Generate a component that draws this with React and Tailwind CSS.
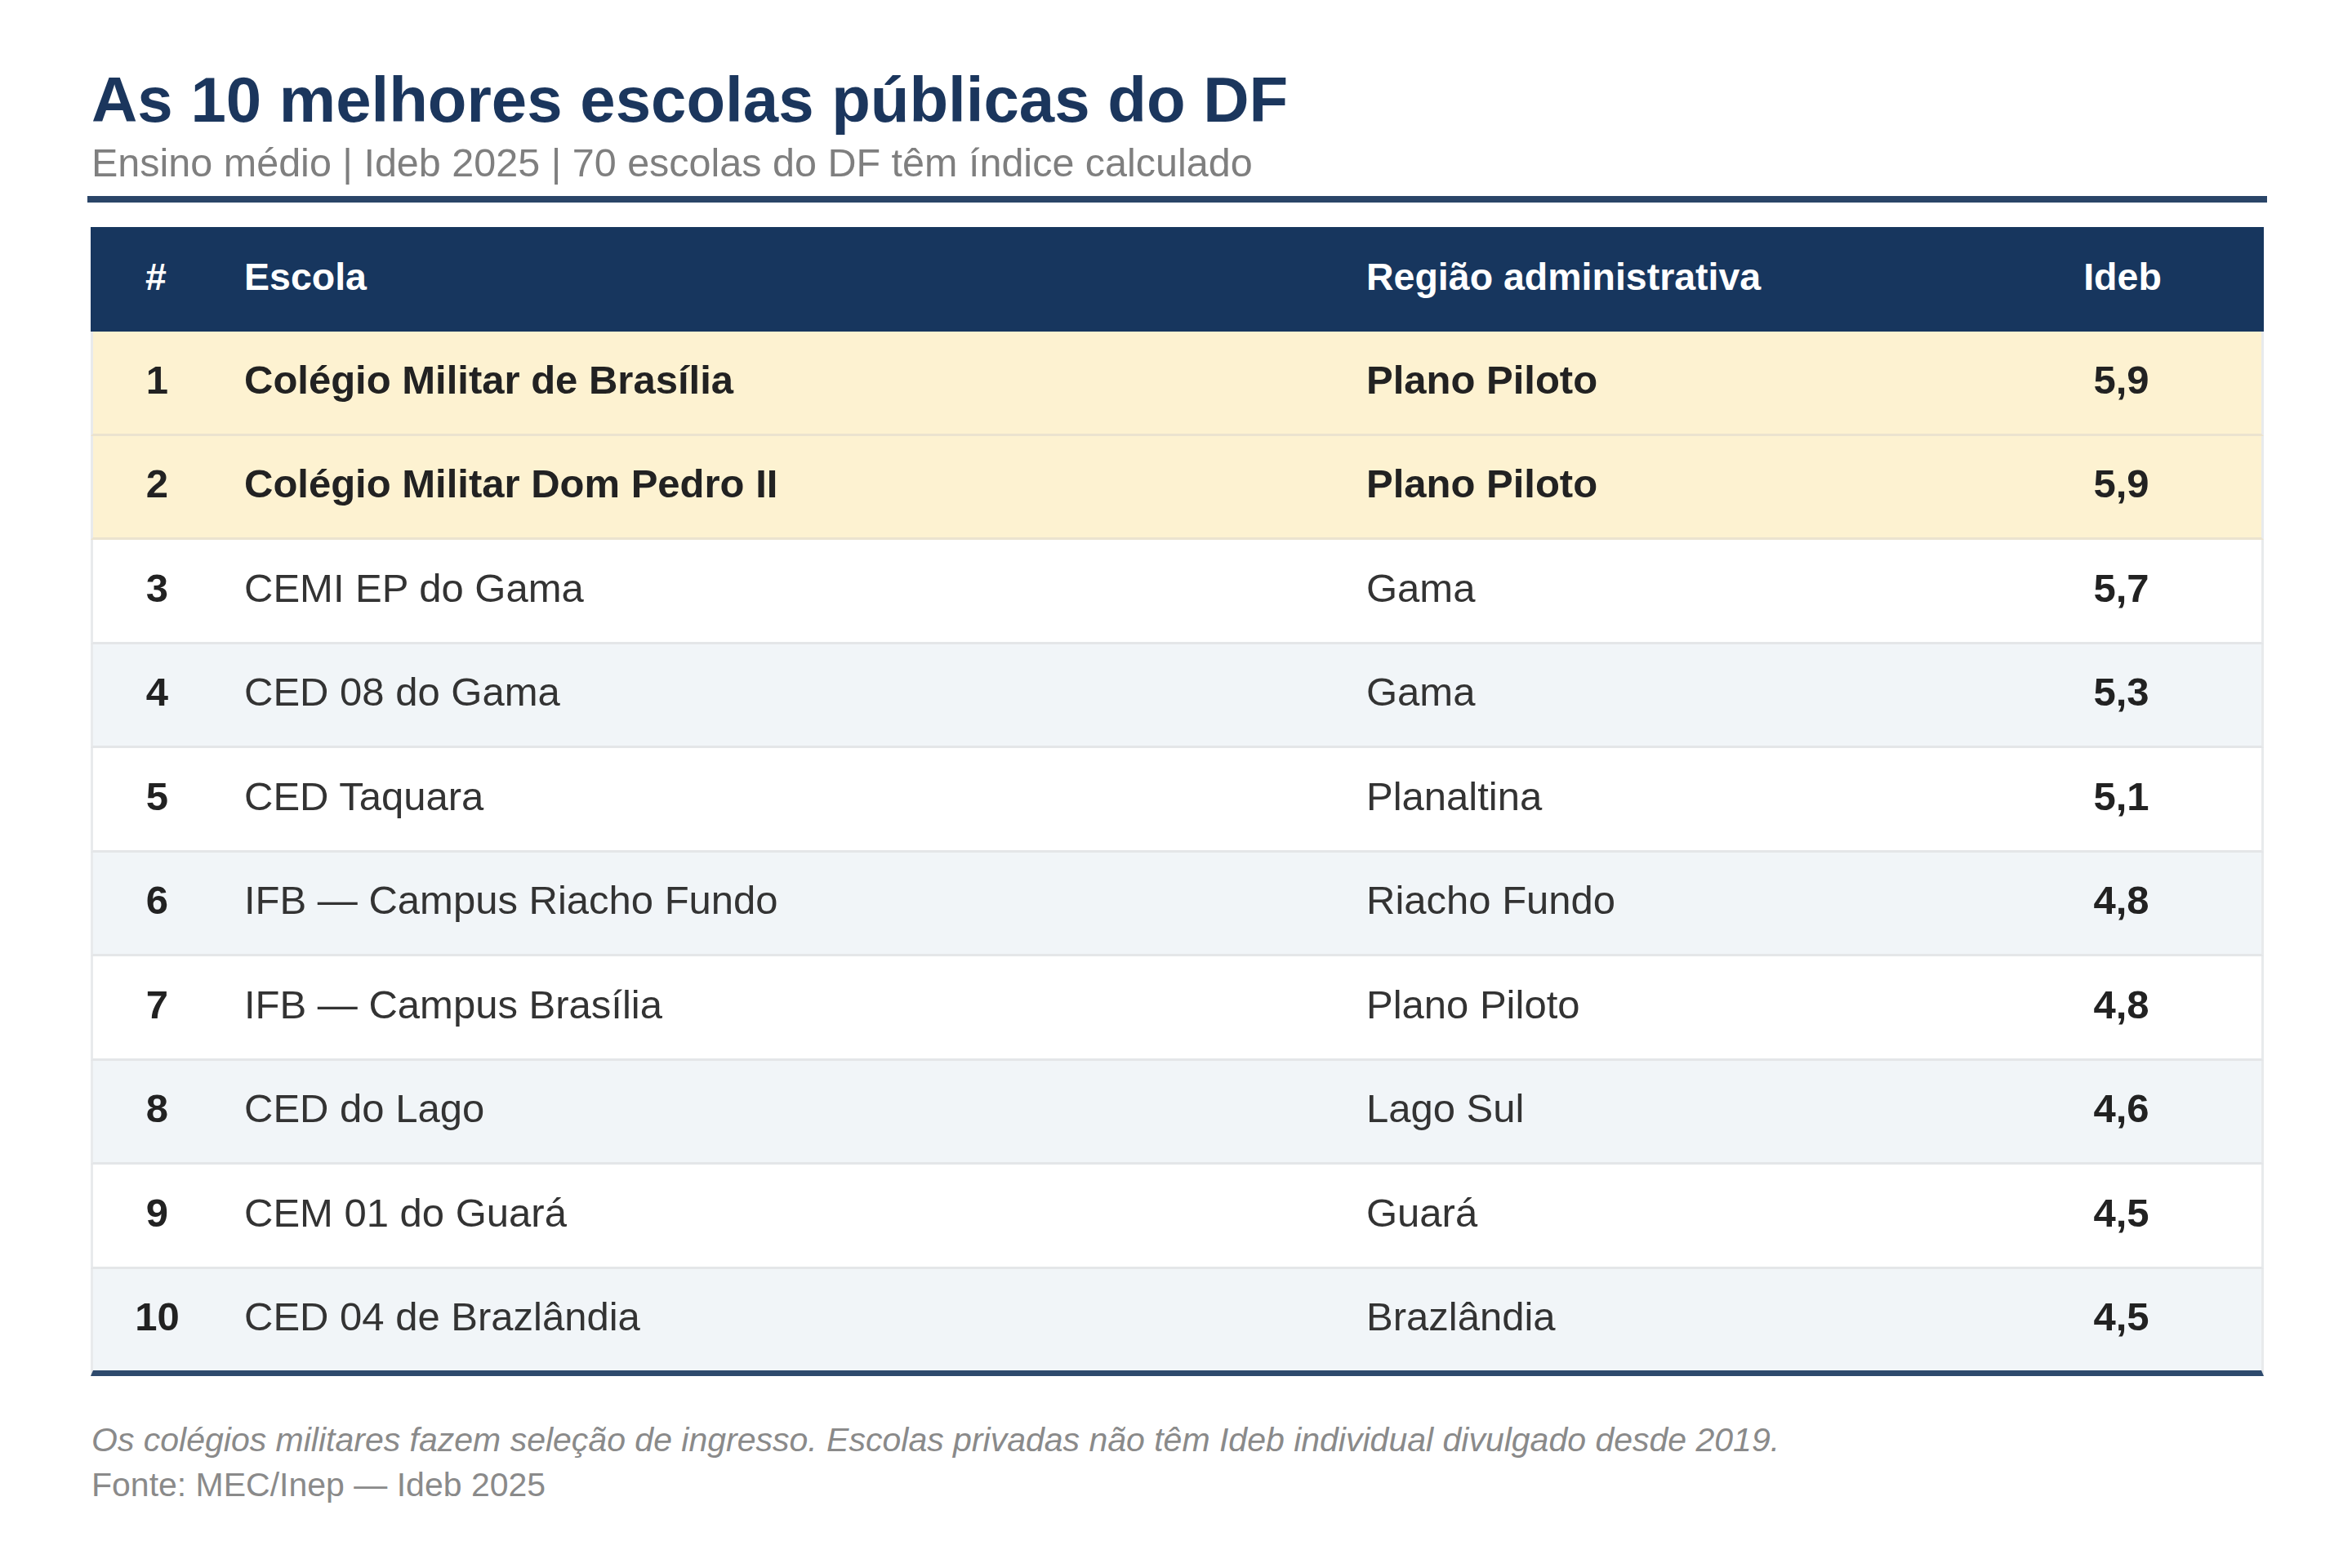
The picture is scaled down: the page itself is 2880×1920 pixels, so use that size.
import React from "react";

const rows = [
  { n: "1", escola: "Colégio Militar de Brasília", regiao: "Plano Piloto", ideb: "5,9", hl: true },
  { n: "2", escola: "Colégio Militar Dom Pedro II", regiao: "Plano Piloto", ideb: "5,9", hl: true },
  { n: "3", escola: "CEMI EP do Gama", regiao: "Gama", ideb: "5,7" },
  { n: "4", escola: "CED 08 do Gama", regiao: "Gama", ideb: "5,3" },
  { n: "5", escola: "CED Taquara", regiao: "Planaltina", ideb: "5,1" },
  { n: "6", escola: "IFB — Campus Riacho Fundo", regiao: "Riacho Fundo", ideb: "4,8" },
  { n: "7", escola: "IFB — Campus Brasília", regiao: "Plano Piloto", ideb: "4,8" },
  { n: "8", escola: "CED do Lago", regiao: "Lago Sul", ideb: "4,6" },
  { n: "9", escola: "CEM 01 do Guará", regiao: "Guará", ideb: "4,5" },
  { n: "10", escola: "CED 04 de Brazlândia", regiao: "Brazlândia", ideb: "4,5" },
];

export default function App() {
  return (
    <div className="min-h-[1920px] w-[2880px] bg-white font-['Liberation_Sans',Arial,sans-serif]">
      <div className="pl-[107px] pt-[77px] w-[2776px]">
        <h1 className="pl-[5px] text-[78px] leading-[90px] font-bold text-[#1b365d]">
          As 10 melhores escolas públicas do DF
        </h1>
        <p className="pl-[5px] pt-[4px] text-[48.5px] leading-[56px] text-[#7f7f7f]">
          Ensino médio | Ideb 2025 | 70 escolas do DF têm índice calculado
        </p>
        <div className="mt-[13px] h-[8px] bg-[#2a4568]" />
        <div className="mt-[30px] mx-[4px]">
          <div className="grid grid-cols-[160px_1374px_781px_1fr] h-[128px] pb-[5px] items-center bg-[#17365e] text-white text-[46.5px] font-bold">
            <div className="text-center">#</div>
            <div className="pl-[28px]">Escola</div>
            <div className="pl-[28px]">Região administrativa</div>
            <div className="text-center">Ideb</div>
          </div>
          {rows.map((r, i) => {
            const last = i === rows.length - 1;
            const bg = r.hl ? "bg-[#fdf2d1]" : i % 2 === 1 ? "bg-[#f1f5f8]" : "bg-white";
            const border = last
              ? "h-[131px] border-b-[7px] border-b-[#2e4a6d]"
              : r.hl
              ? "h-[127.5px] border-b-[3px] border-b-[#ebe3cf]"
              : "h-[127.5px] border-b-[3px] border-b-[#e4e6e8]";
            return (
              <div
                key={r.n}
                className={`grid grid-cols-[157px_1374px_781px_1fr] items-center pb-[6px] border-x-[3px] border-x-[#e8eaec] text-[49px] ${bg} ${border}`}
              >
                <div className="text-center font-bold text-[#222222]">{r.n}</div>
                <div className={`pl-[28px] ${r.hl ? "font-bold text-[#222222]" : "text-[#333333]"}`}>{r.escola}</div>
                <div className={`pl-[28px] ${r.hl ? "font-bold text-[#222222]" : "text-[#333333]"}`}>{r.regiao}</div>
                <div className="text-center font-bold text-[#222222]">{r.ideb}</div>
              </div>
            );
          })}
        </div>
        <div className="pl-[5px] mt-[51px] text-[41px] leading-[55px] text-[#8a8a8a]">
          <p className="italic">
            Os colégios militares fazem seleção de ingresso. Escolas privadas não têm Ideb individual divulgado desde 2019.
          </p>
          <p>Fonte: MEC/Inep — Ideb 2025</p>
        </div>
      </div>
    </div>
  );
}
